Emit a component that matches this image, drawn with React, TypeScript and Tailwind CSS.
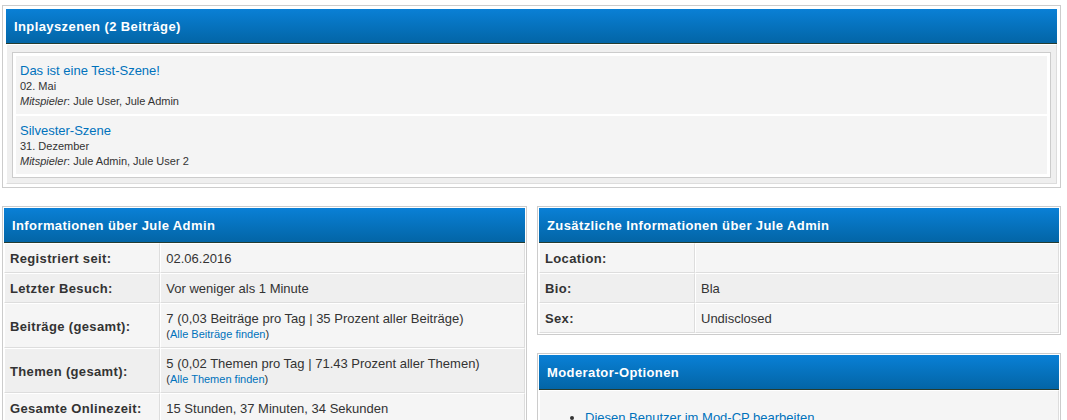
const HEAD =
  "h-[35px] flex items-center border-b border-[#263c30] bg-gradient-to-b from-[#0a80d6] to-[#0365a6] px-2 pt-px text-[13px] font-bold tracking-[0.4px] text-white";

const CELL =
  "border border-t-white border-l-white border-r-[#dddddd] border-b-[#dddddd] px-[5px] pt-[7px] pb-[5px] align-middle leading-4";

type Scene = { title: string; date: string; players: string };

const scenes: Scene[] = [
  { title: "Das ist eine Test-Szene!", date: "02. Mai", players: "Jule User, Jule Admin" },
  { title: "Silvester-Szene", date: "31. Dezember", players: "Jule Admin, Jule User 2" },
];

type Field = { label: string; value: React.ReactNode };

const infoFields: Field[] = [
  { label: "Registriert seit:", value: "02.06.2016" },
  { label: "Letzter Besuch:", value: "Vor weniger als 1 Minute" },
  {
    label: "Beiträge (gesamt):",
    value: (
      <>
        <div>7 (0,03 Beiträge pro Tag | 35 Prozent aller Beiträge)</div>
        <div className="text-[11px] leading-[15px]">
          (<a className="text-[#0072bc]">Alle Beiträge finden</a>)
        </div>
      </>
    ),
  },
  {
    label: "Themen (gesamt):",
    value: (
      <>
        <div>5 (0,02 Themen pro Tag | 71.43 Prozent aller Themen)</div>
        <div className="text-[11px] leading-[15px]">
          (<a className="text-[#0072bc]">Alle Themen finden</a>)
        </div>
      </>
    ),
  },
  { label: "Gesamte Onlinezeit:", value: "15 Stunden, 37 Minuten, 34 Sekunden" },
];

const extraFields: Field[] = [
  { label: "Location:", value: "" },
  { label: "Bio:", value: "Bla" },
  { label: "Sex:", value: "Undisclosed" },
];

function FieldTable({ title, fields }: { title: string; fields: Field[] }) {
  return (
    <div className="border border-[#cccccc] bg-white p-px">
      <div className={HEAD}>{title}</div>
      <table className="w-full border-separate border-spacing-0">
        <tbody>
          {fields.map((f, i) => (
            <tr key={f.label} className={i % 2 ? "bg-[#efefef]" : "bg-[#f5f5f5]"}>
              <td className={`${CELL} w-[30%] font-bold tracking-[0.35px]`}>{f.label}</td>
              <td className={CELL}>{f.value || "\u00a0"}</td>
            </tr>
          ))}
        </tbody>
      </table>
    </div>
  );
}

export default function App() {
  return (
    <div className="min-h-[420px] bg-white pt-[5px] font-['Liberation_Sans',Arial,sans-serif] text-[13px] text-[#333333]">
      {/* Inplay scenes */}
      <div className="ml-[2px] w-[1059px] border border-[#cccccc] bg-white p-[3px]">
        <div className={HEAD}>Inplayszenen (2 Beiträge)</div>
        <div className="border border-t-white border-l-white border-r-[#dddddd] border-b-[#dddddd] bg-[#efefef] px-[5px] pt-[7px] pb-[5px]">
          <div className="flex flex-col gap-[2px] border border-[#cccccc] bg-white p-[3px]">
            {scenes.map((s) => (
              <div key={s.title} className="h-[58px] bg-[#f4f4f4] px-1 pt-[7px]">
                <a className="block leading-4 text-[#0072bc]">{s.title}</a>
                <div className="text-[11px] leading-[15px]">{s.date}</div>
                <div className="text-[11px] leading-[15px]">
                  <i>Mitspieler</i>: {s.players}
                </div>
              </div>
            ))}
          </div>
        </div>
      </div>

      <div className="mt-[18px] ml-[2px] flex items-start gap-[10px]">
        <div className="w-[525px]">
          <FieldTable title="Informationen über Jule Admin" fields={infoFields} />
        </div>
        <div className="w-[524px]">
          <FieldTable title="Zusätzliche Informationen über Jule Admin" fields={extraFields} />
          <div className="mt-[18px] border border-[#cccccc] bg-white p-px">
            <div className={HEAD}>Moderator-Optionen</div>
            <div className="border border-t-white border-l-white border-r-[#dddddd] border-b-[#dddddd] bg-[#f5f5f5] px-[5px] py-[6px]">
              <ul className="my-[13px] list-disc pl-10 leading-4">
                <li>
                  <a className="text-[#0072bc]">Diesen Benutzer im Mod-CP bearbeiten</a>
                </li>
                <li>
                  <a className="text-[#0072bc]">Diesen Benutzer sperren</a>
                </li>
              </ul>
            </div>
          </div>
        </div>
      </div>
    </div>
  );
}
